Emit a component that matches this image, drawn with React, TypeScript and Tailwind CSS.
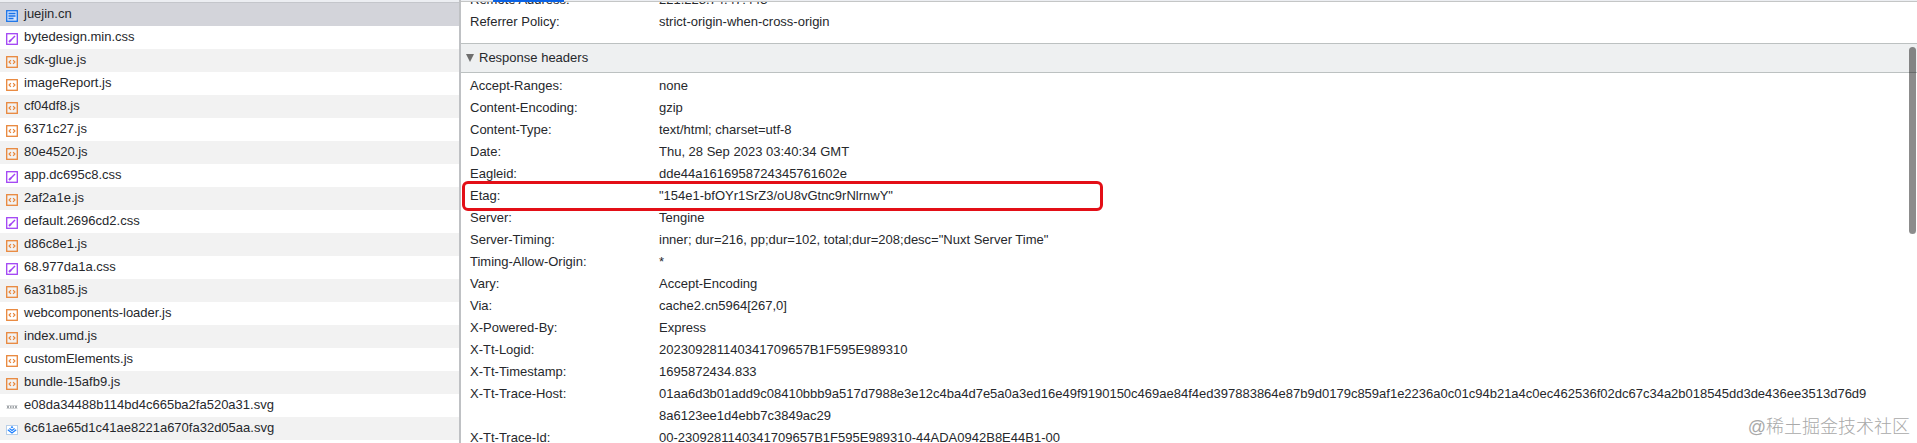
type Kind = "doc" | "css" | "js" | "dots" | "logo";

const requests: { name: string; kind: Kind }[] = [
  { name: "juejin.cn", kind: "doc" },
  { name: "bytedesign.min.css", kind: "css" },
  { name: "sdk-glue.js", kind: "js" },
  { name: "imageReport.js", kind: "js" },
  { name: "cf04df8.js", kind: "js" },
  { name: "6371c27.js", kind: "js" },
  { name: "80e4520.js", kind: "js" },
  { name: "app.dc695c8.css", kind: "css" },
  { name: "2af2a1e.js", kind: "js" },
  { name: "default.2696cd2.css", kind: "css" },
  { name: "d86c8e1.js", kind: "js" },
  { name: "68.977da1a.css", kind: "css" },
  { name: "6a31b85.js", kind: "js" },
  { name: "webcomponents-loader.js", kind: "js" },
  { name: "index.umd.js", kind: "js" },
  { name: "customElements.js", kind: "js" },
  { name: "bundle-15afb9.js", kind: "js" },
  { name: "e08da34488b114bd4c665ba2fa520a31.svg", kind: "dots" },
  { name: "6c61ae65d1c41ae8221a670fa32d05aa.svg", kind: "logo" },
];

const responseHeaders = [
  ["Accept-Ranges:", "none"],
  ["Content-Encoding:", "gzip"],
  ["Content-Type:", "text/html; charset=utf-8"],
  ["Date:", "Thu, 28 Sep 2023 03:40:34 GMT"],
  ["Eagleid:", "dde44a1616958724345761602e"],
  ["Etag:", '"154e1-bfOYr1SrZ3/oU8vGtnc9rNlrnwY"'],
  ["Server:", "Tengine"],
  ["Server-Timing:", 'inner; dur=216, pp;dur=102, total;dur=208;desc="Nuxt Server Time"'],
  ["Timing-Allow-Origin:", "*"],
  ["Vary:", "Accept-Encoding"],
  ["Via:", "cache2.cn5964[267,0]"],
  ["X-Powered-By:", "Express"],
  ["X-Tt-Logid:", "202309281140341709657B1F595E989310"],
  ["X-Tt-Timestamp:", "1695872434.833"],
  [
    "X-Tt-Trace-Host:",
    "01aa6d3b01add9c08410bbb9a517d7988e3e12c4ba4d7e5a0a3ed16e49f9190150c469ae84f4ed397883864e87b9d0179c859af1e2236a0c01c94b21a4c0ec462536f02dc67c34a2b018545dd3de436ee3513d76d98a6123ee1d4ebb7c3849ac29",
  ],
  ["X-Tt-Trace-Id:", "00-2309281140341709657B1F595E989310-44ADA0942B8E44B1-00"],
];

function FileIcon({ kind }: { kind: Kind }) {
  return (
    <svg className="size-3 shrink-0" viewBox="0 0 12 12" fill="none" aria-hidden="true">
      {kind === "doc" && (
        <g stroke="#1a73e8" strokeWidth="1.3">
          <rect x="0.7" y="0.7" width="10.6" height="10.6" fill="#d3e3fd" />
          <path d="M2.5 3.5h7M2.5 6h7M2.5 8.5h5" />
        </g>
      )}
      {kind === "css" && (
        <g stroke="#a142f4">
          <rect x="0.7" y="0.7" width="10.6" height="10.6" strokeWidth="1.3" />
          <path d="M3 9l2-2" strokeWidth="2" />
          <path d="M4.5 7.5L9 3" strokeWidth="1.4" />
        </g>
      )}
      {kind === "js" && (
        <g stroke="#e8863a">
          <rect x="0.7" y="0.7" width="10.6" height="10.6" strokeWidth="1.3" />
          <path d="M4.9 4.2L3.1 6l1.8 1.8M7.1 4.2L8.9 6 7.1 7.8" strokeWidth="1.2" />
        </g>
      )}
      {kind === "dots" && (
        <g stroke="#a3a7ab" strokeWidth="0.8">
          <path d="M0.5 4.5h11M0.5 7.5h11" strokeOpacity="0.6" />
          <path d="M1 6h2M4 6h1.5M6.5 6H8M9 6h2" strokeWidth="2" />
        </g>
      )}
      {kind === "logo" && (
        <g>
          <rect x="0.5" y="1.5" width="11" height="9" fill="#fff" stroke="#b9cfe8" />
          <path d="M6 2l1.4 1.2L6 4.3 4.6 3.2z" fill="#1e80ff" />
          <path d="M3.4 4.4L6 6.4l2.6-2M1.8 5.7L6 9l4.2-3.3" stroke="#1e80ff" strokeWidth="1.2" />
        </g>
      )}
    </svg>
  );
}

export default function App() {
  return (
    <div className="relative flex h-screen overflow-hidden bg-white font-['Liberation_Sans',Arial,sans-serif] text-[13px] text-[#26282c]">
      <nav className="w-[459px] shrink-0 overflow-hidden border-t-2 border-[#eceef2]" aria-label="Requests">
        <ul className="border-t border-[#c4c6cb]">
          {requests.map((request, index) => (
            <li key={request.name}>
              <a
                href="#headers"
                className={`flex h-[23px] items-center gap-[6px] pb-[2px] pl-[6px] ${
                  index === 0 ? "bg-[#d3d4da]" : index % 2 === 0 ? "bg-[#f2f2f2]" : "bg-white"
                }`}
              >
                <span className="pt-1">
                  <FileIcon kind={request.kind} />
                </span>
                {request.name}
              </a>
            </li>
          ))}
        </ul>
      </nav>

      <main id="headers" className="min-w-0 flex-1 overflow-hidden border-l-2 border-[#bfc1c4]">
        <div className="h-[2px] border-b border-[#c4c6c6] bg-[#eceef2]">
          <div className="ml-8 h-[2px] w-[71px] bg-[#0b63e5]" />
        </div>
        <dl className="h-[42px] overflow-hidden border-b border-[#bcc1c1] pl-[9px] leading-[22px]">
          <div className="-mt-[13px] flex">
            <dt className="w-[189px] shrink-0">Remote Address:</dt>
            <dd>221.228.74.47:443</dd>
          </div>
          <div className="flex">
            <dt className="w-[189px] shrink-0">Referrer Policy:</dt>
            <dd>strict-origin-when-cross-origin</dd>
          </div>
        </dl>

        <button className="flex h-[29px] w-full items-center gap-[5px] border-b border-[#bcc1c1] bg-[#eef0f1] pl-[5px]">
          <svg className="h-2 w-2" viewBox="0 0 8 8" aria-hidden="true">
            <path d="M0 0h8L4 8z" fill="#6e6e6e" />
          </svg>
          Response headers
        </button>

        <dl className="pt-[2px] leading-[22px]">
          {responseHeaders.map(([name, value]) => (
            <div key={name} className="relative flex pr-12 pl-[9px]">
              <dt className="w-[189px] shrink-0">{name}</dt>
              <dd className="min-w-0 break-all">{value}</dd>
              {name === "Etag:" && (
                <span className="absolute -top-1 left-px h-[30px] w-[641px] rounded-md border-[3px] border-[#e30f17]" />
              )}
            </div>
          ))}
        </dl>
      </main>

      <div className="absolute top-[47px] right-px h-[187px] w-[7px] rounded-full bg-black/45" />
      <p className="absolute right-[7px] bottom-0.5 font-['Liberation_Sans','Noto_Sans_CJK_SC',sans-serif] text-lg font-light text-[#a9a9a9]">
        @稀土掘金技术社区
      </p>
    </div>
  );
}
